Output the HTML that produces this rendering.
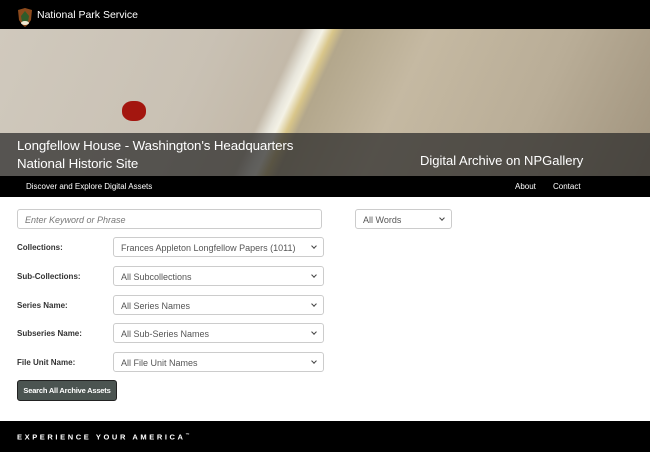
<!DOCTYPE html>
<html><head><style>
*{box-sizing:border-box;margin:0;padding:0}
body{width:650px;height:452px;overflow:hidden;font-family:"Liberation Sans",sans-serif;background:#fff;position:relative}
.top{position:absolute;left:0;top:0;width:650px;height:29px;background:#000}
.top span{position:absolute;left:37px;top:9px;color:#fff;font-size:10.5px}
.hero{position:absolute;left:0;top:29px;width:650px;height:147px;overflow:hidden;
background:linear-gradient(115deg,#d0c9bd 0%,#c9c1b4 30%,#c3b9a9 42%,#e8e6dc 44%,#f4f2e6 45%,#d9c68a 46.5%,#b3a78c 48%,#c5b9a2 60%,#b9ad97 80%,#a0937d 100%)}
.seal{position:absolute;left:122px;top:72px;width:24px;height:20px;border-radius:45%;background:#a3160f}
.band{position:absolute;left:0;top:104px;width:650px;height:43px;background:rgba(40,40,40,.72)}
.band .t{position:absolute;left:17px;top:4px;color:#fff;font-size:13.3px;line-height:18px;letter-spacing:-0.1px}
.band .r{position:absolute;left:420px;top:20px;color:#fff;font-size:13px}
.nav{position:absolute;left:0;top:176px;width:650px;height:21px;background:#000;color:#fff;font-size:8px}
.nav span{position:absolute;top:6px}
.in{position:absolute;border:1px solid #ccc;border-radius:3px;height:20px;font-size:9px;color:#555;padding:5px 7px;background:#fff;white-space:nowrap}
.in i{font-style:italic;color:#777}
.sel:after{content:"";position:absolute;right:7px;top:6px;width:3px;height:3px;border-right:1px solid #444;border-bottom:1px solid #444;transform:rotate(45deg)}
.lbl{position:absolute;left:17px;font-size:8px;font-weight:bold;color:#333}
.btn{position:absolute;left:17px;top:380px;width:100px;height:21px;background:#4b5451;border:1px solid #222;border-radius:3px;color:#fff;font-size:7.5px;font-weight:bold;text-align:center;line-height:19px;white-space:nowrap;letter-spacing:-0.2px}
.foot{position:absolute;left:0;top:421px;width:650px;height:31px;background:#000;color:#fff;font-size:7.5px;font-weight:bold;letter-spacing:2.6px}
.foot span{position:absolute;left:17px;top:11px}
</style></head><body>
<div class="top">
<svg style="position:absolute;left:17px;top:8px" width="16" height="19" viewBox="0 0 16 19"><path d="M1 2 L8 0 L15 2 L14 12 Q11 17 8 19 Q5 17 2 12 Z" fill="#8c4a1c"/><path d="M4 8 L8 3 L12 8 L11 14 Q8 17 5 14 Z" fill="#2f5c2a"/><ellipse cx="8" cy="15" rx="4" ry="2" fill="#f0e8d0"/></svg>
<span>National Park Service</span></div>
<div class="hero"><div class="seal"></div>
<div class="band"><div class="t">Longfellow House - Washington's Headquarters<br>National Historic Site</div><div class="r">Digital Archive on NPGallery</div></div></div>
<div class="nav"><span style="left:26px">Discover and Explore Digital Assets</span><span style="left:515px">About</span><span style="left:553px">Contact</span></div>
<div class="in" style="left:17px;top:209px;width:305px"><i>Enter Keyword or Phrase</i></div>
<div class="in sel" style="left:355px;top:209px;width:97px">All Words</div>
<div class="lbl" style="top:243px">Collections:</div>
<div class="in sel" style="left:113px;top:237px;width:211px">Frances Appleton Longfellow Papers (1011)</div>
<div class="lbl" style="top:272px">Sub-Collections:</div>
<div class="in sel" style="left:113px;top:266px;width:211px">All Subcollections</div>
<div class="lbl" style="top:301px">Series Name:</div>
<div class="in sel" style="left:113px;top:295px;width:211px">All Series Names</div>
<div class="lbl" style="top:329px">Subseries Name:</div>
<div class="in sel" style="left:113px;top:323px;width:211px">All Sub-Series Names</div>
<div class="lbl" style="top:358px">File Unit Name:</div>
<div class="in sel" style="left:113px;top:352px;width:211px">All File Unit Names</div>
<div class="btn">Search All Archive Assets</div>
<div class="foot"><span>EXPERIENCE YOUR AMERICA<sup style="font-size:4px">™</sup></span></div>
</body></html>
